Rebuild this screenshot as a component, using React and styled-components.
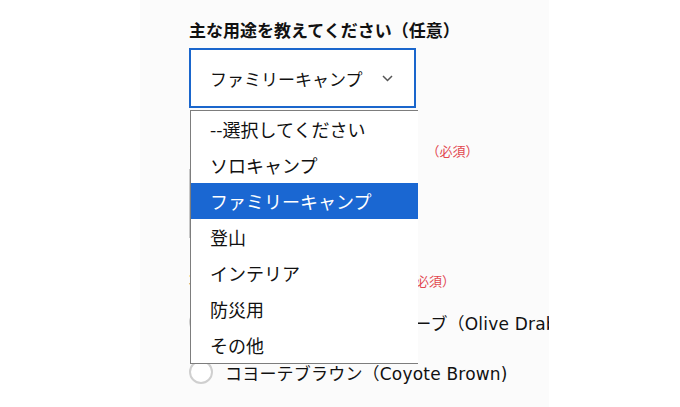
import React from 'react';
import styled, { createGlobalStyle } from 'styled-components';

const GlobalStyle = createGlobalStyle`
  body {
    margin: 0;
    background: #ffffff;
    font-family: "DejaVu Sans", "Noto Sans CJK JP", sans-serif;
    color: #111;
  }
`;

const Page = styled.div`
  padding-left: 140px;
`;

const Panel = styled.div`
  width: 409px;
  min-height: 407px;
  box-sizing: border-box;
  background: #fbfbfb;
  padding: 18px 0 0 49px;
  overflow: hidden;
  display: flex;
  flex-direction: column;
  gap: 29px;
`;

const Field = styled.div`
  display: flex;
  flex-direction: column;
  gap: ${(p) => p.$gap || 6}px;
`;

const Label = styled.div`
  font-family: "Noto Sans CJK JP", sans-serif;
  font-size: 17px;
  font-weight: 700;
  line-height: 24px;
  white-space: nowrap;
`;

const Required = styled.span`
  margin-left: ${(p) => p.$offset || 0}px;
  font-size: 13px;
  font-weight: 400;
  color: #e2474f;
`;

const SelectWrap = styled.div`
  position: relative;
  width: 227px;
`;

const SelectBox = styled.div`
  box-sizing: border-box;
  border: 2px solid ${(p) => (p.$focused ? '#1a66cc' : '#c8c8c8')};
  background: #fff;
  display: flex;
  align-items: center;
  justify-content: space-between;
  padding: 0 21px 0 19px;
  font-family: "Noto Sans CJK JP", sans-serif;
  font-size: 17px;
  height: ${(p) => p.$height || 60}px;
  width: ${(p) => p.$width || 227}px;
`;

const OptionList = styled.ul`
  position: absolute;
  top: calc(100% + 2px);
  left: 1px;
  width: 227px;
  margin: 0;
  padding: 0;
  list-style: none;
  background: #fff;
  border: 1px solid #7d7d7d;
  border-right: none;
  z-index: 10;
`;

const Option = styled.li`
  height: 36px;
  line-height: 36px;
  padding-left: 19px;
  font-family: "Noto Sans CJK JP", sans-serif;
  font-size: 18px;
  white-space: nowrap;
  background: ${(p) => (p.$selected ? '#1a67d2' : 'transparent')};
  color: ${(p) => (p.$selected ? '#fff' : '#111')};
`;

const RadioList = styled.div`
  display: flex;
  flex-direction: column;
`;

const RadioRow = styled.label`
  height: 50px;
  display: flex;
  align-items: center;
  gap: 12px;
  white-space: nowrap;
  font-size: 17px;
  letter-spacing: 0.2px;
`;

const RadioCircle = styled.span`
  flex: none;
  width: 24px;
  height: 24px;
  box-sizing: border-box;
  border-radius: 50%;
  border: 2px solid #cfcfcf;
  background: #fff;
`;

const Chevron = () => (
  <svg width="11" height="7" viewBox="0 0 11 7">
    <polyline points="1,1 5.5,5.5 10,1" fill="none" stroke="#555" strokeWidth="1.5" />
  </svg>
);

const options = [
  '--選択してください',
  'ソロキャンプ',
  'ファミリーキャンプ',
  '登山',
  'インテリア',
  '防災用',
  'その他',
];

const colors = [
  'ミリタリーカラー・オリーブ（Olive Drab）',
  'コヨーテブラウン（Coyote Brown)',
];

export default function App() {
  const selected = 'ファミリーキャンプ';
  return (
    <Page>
      <GlobalStyle />
      <Panel>
        <Field>
          <Label>主な用途を教えてください（任意）</Label>
          <SelectWrap>
            <SelectBox $focused>
              <span>{selected}</span>
              <Chevron />
            </SelectBox>
            <OptionList>
              {options.map((o) => (
                <Option key={o} $selected={o === selected}>{o}</Option>
              ))}
            </OptionList>
          </SelectWrap>
        </Field>
        <Field>
          <Label>
            キャンプの経験はありますか
            <Required $offset={17}>（必須）</Required>
          </Label>
          <SelectBox $width={215} $height={69} />
        </Field>
        <Field $gap={4}>
          <Label>
            本体カラーを選択ください
            <Required $offset={10}>（必須）</Required>
          </Label>
          <RadioList>
            {colors.map((c) => (
              <RadioRow key={c}>
                <RadioCircle />
                {c}
              </RadioRow>
            ))}
          </RadioList>
        </Field>
      </Panel>
    </Page>
  );
}
